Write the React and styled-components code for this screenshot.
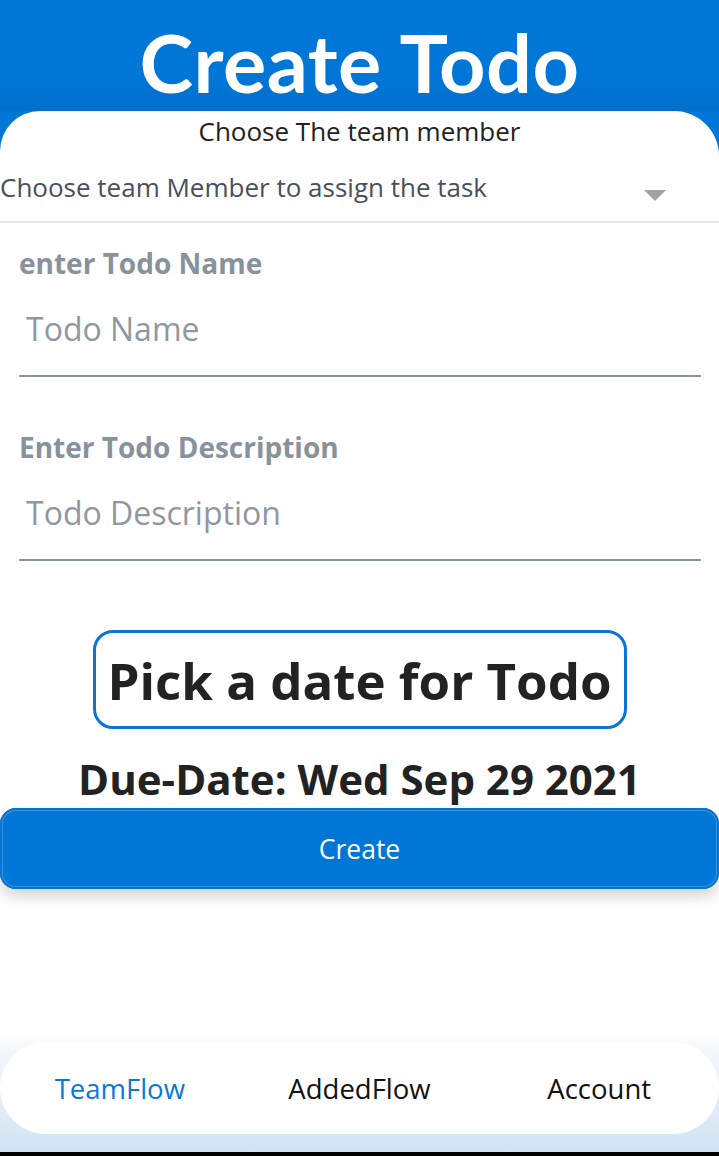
import React from "react";
import styled, { createGlobalStyle } from "styled-components";

const GlobalStyle = createGlobalStyle`
	html, body {
		margin: 0;
		padding: 0;
		background: #ffffff;
	}
	body {
		font-family: "Open Sans", "Liberation Sans", sans-serif;
	}
	* {
		box-sizing: border-box;
	}
`;

const tabs = [
	{ label: "TeamFlow", active: true },
	{ label: "AddedFlow" },
	{ label: "Account" },
];

function App() {
	return (
		<Page>
			<GlobalStyle />
			<Header>
				<Title>Create Todo</Title>
			</Header>
			<Card>
				<Caption>Choose The team member</Caption>
				<Picker>
					<PickerText>Choose team Member to assign the task</PickerText>
					<Caret />
				</Picker>

				<Field $top={25}>
					<Label>enter Todo Name</Label>
					<Input placeholder="Todo Name" />
				</Field>
				<Field $top={55}>
					<Label>Enter Todo Description</Label>
					<Input placeholder="Todo Description" />
				</Field>

				<DateButton>Pick a date for Todo</DateButton>
				<DueDate>Due-Date: Wed Sep 29 2021</DueDate>
				<CreateButton>Create</CreateButton>

				<Spacer />
				<TabArea>
					<TabBar>
						{tabs.map((t) => (
							<Tab key={t.label} $active={t.active}>
								{t.label}
							</Tab>
						))}
					</TabBar>
				</TabArea>
				<NavStrip />
			</Card>
		</Page>
	);
}

export default App;

const Page = styled.div`
	width: 719px;
	min-height: 1156px;
	display: flex;
	flex-direction: column;
	background: #0076d7;
	overflow: hidden;
`;

const Header = styled.div`
	height: 111px;
	display: flex;
	justify-content: center;
	align-items: flex-start;
	background: linear-gradient(180deg, #0077d8 0%, #0076d7 70%, #0070cc 100%);
`;

const Title = styled.h1`
	margin: 14px 0 0;
	font-family: "Lato", "Open Sans", sans-serif;
	font-weight: 700;
	font-size: 81px;
	line-height: 96px;
	color: #ffffff;
	letter-spacing: 0.5px;
`;

const Card = styled.div`
	flex: 1;
	display: flex;
	flex-direction: column;
	background: #ffffff;
	border-radius: 40px 45px 0 0;
`;

const Caption = styled.div`
	padding-top: 5px;
	text-align: center;
	font-size: 26px;
	line-height: 30px;
	color: #222222;
`;

const Picker = styled.div`
	height: 77px;
	display: flex;
	align-items: center;
	justify-content: space-between;
	padding: 6px 53px 0 0;
	border-bottom: 2px solid #e6e6e6;
`;

const PickerText = styled.span`
	font-size: 26px;
	color: #4a4f5c;
	white-space: nowrap;
`;

const Caret = styled.span`
	width: 0;
	height: 0;
	margin-top: 18px;
	border-left: 11px solid transparent;
	border-right: 11px solid transparent;
	border-top: 11px solid #a3a3a3;
`;

const Field = styled.div`
	margin: ${(p) => p.$top}px 18px 0 19px;
	display: flex;
	flex-direction: column;
`;

const Label = styled.div`
	font-size: 28px;
	font-weight: 700;
	line-height: 30px;
	color: #87929d;
`;

const Input = styled.input`
	margin-top: 27px;
	height: 72px;
	padding: 0 0 24px 7px;
	border: none;
	border-bottom: 2px solid #87929d;
	outline: none;
	background: transparent;
	font-family: inherit;
	font-size: 32px;
	color: #222222;

	&::placeholder {
		color: #8e98a2;
	}
`;

const DateButton = styled.button`
	align-self: center;
	margin-top: 69px;
	width: 534px;
	height: 99px;
	padding: 0;
	border: 3px solid #0a74d6;
	border-radius: 20px;
	background: #ffffff;
	font-family: inherit;
	font-weight: 700;
	font-size: 51px;
	color: #222222;
	cursor: pointer;
`;

const DueDate = styled.div`
	margin-top: 24px;
	text-align: center;
	font-weight: 700;
	font-size: 42px;
	line-height: 52px;
	color: #222222;
	white-space: nowrap;
`;

const CreateButton = styled.button`
	margin-top: 3px;
	height: 81px;
	width: 100%;
	border: none;
	border-radius: 16px;
	background: #0076d7;
	box-shadow: inset 0 0 0 2px #0076d7, inset 0 0 0 3px #3a92de,
		0 8px 14px rgba(0, 0, 0, 0.16);
	font-family: inherit;
	font-size: 26.5px;
	color: #ffffff;
	cursor: pointer;
`;

const Spacer = styled.div`
	flex: 1;
`;

const TabArea = styled.div`
	padding: 12px 0 18px;
	background: linear-gradient(180deg, #ffffff 0%, #f1f6fb 20%, #e3edf8 60%, #d0e2f3 100%);
`;

const TabBar = styled.nav`
	height: 92px;
	display: grid;
	grid-template-columns: repeat(3, 1fr);
	align-items: center;
	background: #ffffff;
	border-radius: 46px;
`;

const Tab = styled.span`
	text-align: center;
	font-size: 27.5px;
	color: ${(p) => (p.$active ? "#0a78d9" : "#111111")};
`;

const NavStrip = styled.div`
	height: 4px;
	background: #000000;
`;
